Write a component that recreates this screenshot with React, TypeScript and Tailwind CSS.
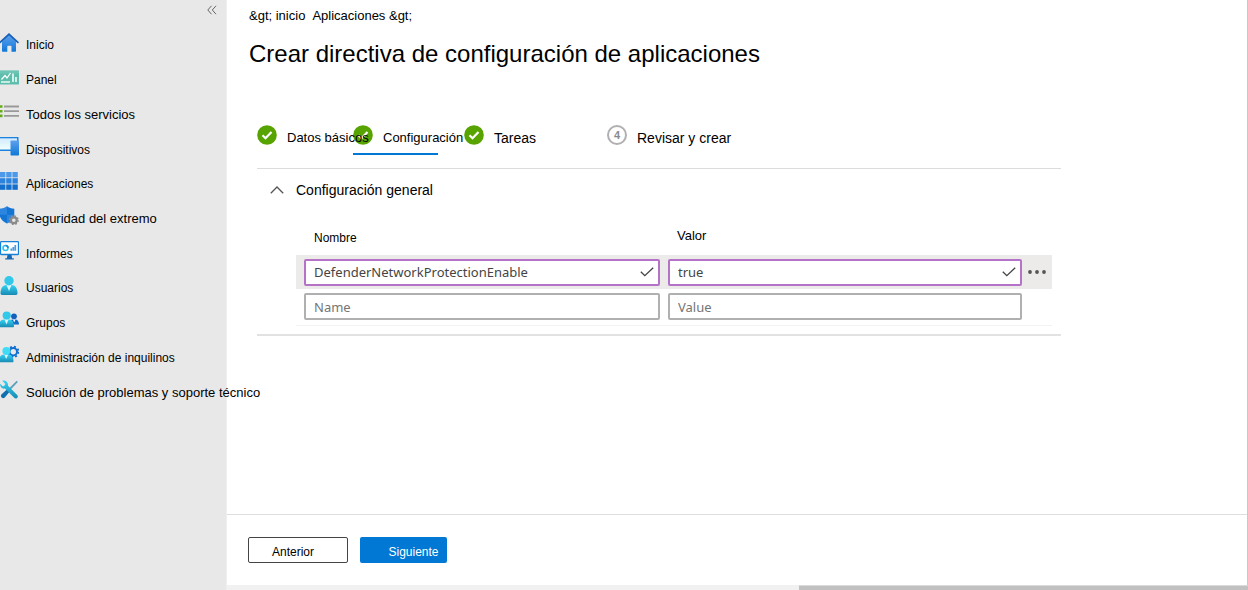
import { useState } from "react";
import type { ReactNode } from "react";
import clsx from "clsx";

function Svg({ children }: { children: ReactNode }) {
  return (
    <svg viewBox="0 0 19 19" className="size-[19px] shrink-0" aria-hidden="true">
      {children}
    </svg>
  );
}

function Gradients() {
  return (
    <svg className="absolute size-0" aria-hidden="true">
      <defs>
        <linearGradient id="blue" x1="0" y1="0" x2="0" y2="1">
          <stop offset="0" stopColor="#5ea0ef" />
          <stop offset="1" stopColor="#0f78d6" />
        </linearGradient>
        <linearGradient id="cyan" x1="0" y1="0" x2="0" y2="1">
          <stop offset="0" stopColor="#32d4f5" />
          <stop offset="1" stopColor="#198ab3" />
        </linearGradient>
        <linearGradient id="screen" x1="0" y1="0" x2="0" y2="1">
          <stop offset="0" stopColor="#d2ebff" />
          <stop offset="1" stopColor="#f0fffd" />
        </linearGradient>
      </defs>
    </svg>
  );
}

const HomeIcon = () => (
  <Svg>
    <path d="M2 8.500 9 2l7 6.500V18a.8.8 0 0 1-.8.8H11.500v-5.300a.7.7 0 0 0-.7-.7H8a.7.7 0 0 0-.7.7v5.300H2.800a.8.8 0 0 1-.8-.8z" fill="url(#blue)" />
    <path d="M9 0 19 9.300l-1.100 1.100L9 2.600.1 10.400-1 9.300z" fill="#1560b8" />
  </Svg>
);

const DashboardIcon = () => (
  <Svg>
    <rect x="-1" y="2.500" width="20" height="14" rx=".6" fill="#5fbdab" />
    <path d="M-1 2.500h20v3H-1z" fill="#7ccfbf" opacity=".5" />
    <path d="M1.500 11.500 5 7.500l2 2.500 3.500-5" fill="none" stroke="#fff" strokeWidth="1.300" />
    <path d="M1 14h9M13 5.500V14M16 9v5" fill="none" stroke="#e9faf6" strokeWidth="1.700" />
  </Svg>
);

const ServicesIcon = () => (
  <Svg>
    <path d="M4 4.500h15M4 9.200h15M4 13.900h15" stroke="#999" strokeWidth="1.800" />
    <path d="M0 4.500h2.500M0 9.200h2.500M0 13.900h2.500" stroke="#65ad16" strokeWidth="2.600" />
  </Svg>
);

const DevicesIcon = () => (
  <Svg>
    <rect x="-2" y="0" width="20.500" height="14" rx=".6" fill="#1b83dd" />
    <rect x="-1" y="1.300" width="18" height="11.200" fill="url(#screen)" />
    <rect x="10.500" y="3.500" width="8.500" height="15" rx=".7" fill="url(#blue)" />
  </Svg>
);

const AppsIcon = () => (
  <Svg>
    {[0, 1, 2].map((row) =>
      [0, 1, 2].map((col) => (
        <rect
          key={`${row}-${col}`}
          x={col * 6.2}
          y={row * 6.2}
          width="5.400"
          height="5.400"
          fill={["#4c98ea", "#2b82df", "#136fcd"][row]}
        />
      )),
    )}
  </Svg>
);

const ShieldIcon = () => (
  <Svg>
    <path d="M7 .3c2 1.600 4.200 2.300 7.300 2.400v6c0 4-3.500 6.900-7.300 8.800C3.200 15.600-.3 12.700-.3 8.700v-6C2.800 2.600 5 1.900 7 .3z" fill="#1474d4" />
    <path d="M7 .3v8.500H-.3V2.700C2.800 2.600 5 1.900 7 .3zM7 8.800h7.300c0 4-3.500 6.900-7.300 8.700z" fill="#4a9bea" opacity=".45" />
    <circle cx="13.800" cy="14.200" r="2.900" fill="#e8e8e8" stroke="#8a8a8a" strokeWidth="2.200" />
    <circle cx="13.800" cy="14.200" r="4.300" fill="none" stroke="#8a8a8a" strokeWidth="1.500" strokeDasharray="1.690 1.690" />
  </Svg>
);

const ReportsIcon = () => (
  <Svg>
    <rect x=".5" y=".7" width="18" height="12.800" rx=".8" fill="#fff" stroke="#1780d8" strokeWidth="1.300" />
    <circle cx="5.500" cy="7" r="2.500" fill="none" stroke="#32c4ee" strokeWidth="1.600" />
    <path d="M5.500 4.500A2.500 2.500 0 0 1 8 7" fill="none" stroke="#1e8ad8" strokeWidth="1.600" />
    <path d="M11.300 9.800V7.500M13.300 9.800V6M15.300 9.800V4" stroke="#4a9be0" strokeWidth="1.700" />
    <path d="M7.500 14h4l.6 3.200h1.700v1.300H5.200v-1.300h1.700z" fill="#1668b5" />
  </Svg>
);

const UserIcon = () => (
  <Svg>
    <path d="M.5 17.300C.5 12.500 3 9 6.300 9h5.400c3.300 0 5.800 3.500 5.800 8.300 0 .9-.6 1.600-1.500 1.600H2c-.9 0-1.500-.7-1.500-1.600z" fill="url(#cyan)" />
    <path d="M6.500 9h5l-2.500 6z" fill="#fff" opacity=".85" />
    <circle cx="9" cy="4.700" r="4.700" fill="#32c8ea" />
  </Svg>
);

const GroupsIcon = () => (
  <Svg>
    <path d="M9.500 13.500c0-3.200 1.400-5 3.200-5h2.800c2 0 3.500 2 3.500 5z" fill="#0f6cc8" />
    <circle cx="14" cy="5.300" r="2.900" fill="#1560bd" />
    <path d="M13 8.500h2.500l-1.300 3z" fill="#fff" />
    <path d="M-1 15.200C-1 11 1 8.500 4 8.500h5c2.800 0 5 2.700 5 6.700 0 .6-.4 1.100-1 1.100H0c-.6 0-1-.5-1-1.100z" fill="url(#cyan)" />
    <path d="M4.500 8.500h4l-2 5z" fill="#fff" opacity=".85" />
    <circle cx="6.700" cy="4.500" r="4.100" fill="#32c8ea" />
  </Svg>
);

const TenantIcon = () => (
  <Svg>
    <circle cx="13.300" cy="6.800" r="3.700" fill="none" stroke="#0f6fd0" strokeWidth="2" />
    <circle cx="13.300" cy="6.800" r="5.200" fill="none" stroke="#0f6fd0" strokeWidth="1.800" strokeDasharray="2.040 2.040" />
    <path d="M-1 16.200C-1 12 1 9.500 4 9.500h4.500c2.800 0 5 2.700 5 6.700 0 .6-.4 1.100-1 1.100H0c-.6 0-1-.5-1-1.100z" fill="url(#cyan)" />
    <path d="M4.200 9.500h4l-2 4.500z" fill="#fff" opacity=".85" />
    <circle cx="6.400" cy="5.900" r="4" fill="#40dcf5" />
  </Svg>
);

const ToolsIcon = () => (
  <Svg>
    <path d="M16.700.800 17.800 1.900 9.800 10.400 8.400 9z" fill="#5b9fbd" />
    <path d="M8.300 8.300 10.600 10.600 4.800 17.400a2.200 2.200 0 0 1-3.200-3.200z" fill="#0f6fb0" />
    <path d="M2.300.800 5.400 4 4.500 5.600 2.900 6.400.3 3.800C-.4 6.900 2 9.200 5 8.500l9.200 9.300a2 2 0 0 0 3-2.800L8 5.800C8.600 2.500 5.400-.2 2.300.800z" fill="url(#cyan)" />
  </Svg>
);

const navItems = [
  { label: "Inicio", Icon: HomeIcon },
  { label: "Panel", Icon: DashboardIcon },
  { label: "Todos los servicios", Icon: ServicesIcon, large: true },
  { label: "Dispositivos", Icon: DevicesIcon },
  { label: "Aplicaciones", Icon: AppsIcon },
  { label: "Seguridad del extremo", Icon: ShieldIcon, large: true },
  { label: "Informes", Icon: ReportsIcon },
  { label: "Usuarios", Icon: UserIcon },
  { label: "Grupos", Icon: GroupsIcon },
  { label: "Administración de inquilinos", Icon: TenantIcon },
  { label: "Solución de problemas y soporte técnico", Icon: ToolsIcon, large: true },
];

function Sidebar() {
  return (
    <aside className="relative z-10 flex w-[227px] shrink-0 flex-col border-r border-[#efefef] bg-[#e8e8e8]">
      <button type="button" aria-label="Contraer menú" className="mr-1.5 flex h-5 w-4 items-center justify-center self-end text-[#666]">
        <svg viewBox="0 0 10 10" className="size-2.5" fill="none" stroke="currentColor" aria-hidden="true">
          <path d="M4.500.800.800 5l3.700 4.200M9 .800 5.300 5 9 9.200" />
        </svg>
      </button>
      <nav className="pt-[5px]">
        <ul className="grid h-[382px] auto-rows-fr">
          {navItems.map(({ label, Icon, large }) => (
            <li key={label} className="flex">
              <a
                href="#"
                className={clsx(
                  "flex items-center gap-[7px] whitespace-nowrap",
                  large ? "text-[13px]" : "text-xs",
                )}
              >
                <Icon />
                <span className="pt-1.5">{label}</span>
              </a>
            </li>
          ))}
        </ul>
      </nav>
    </aside>
  );
}

function DoneBadge() {
  return (
    <svg viewBox="0 0 20 20" className="size-5 shrink-0" aria-hidden="true">
      <circle cx="10" cy="10" r="9.800" fill="#57a300" />
      <path d="m5.500 10.200 3 3 6-6.300" fill="none" stroke="#fff" strokeWidth="2.200" />
    </svg>
  );
}

const steps = [
  { label: "Datos básicos", width: "w-24", text: "text-[13px]", done: true },
  { label: "Configuración", width: "w-[111px]", text: "text-[13px]", done: true, active: true },
  { label: "Tareas", width: "w-[143px]", text: "text-sm", done: true },
  { label: "Revisar y crear", width: "w-36", text: "text-sm", done: false },
];

function Stepper() {
  return (
    <ol className="flex h-11 border-b border-[#dcdcdc]">
      {steps.map((step, index) => (
        <li key={step.label} className={clsx("shrink-0", step.width)}>
          <button type="button" className="flex h-5 items-center gap-2.5 whitespace-nowrap">
            {step.done ? (
              <DoneBadge />
            ) : (
              <span className="flex size-5 shrink-0 items-center justify-center rounded-full border-2 border-[#b0b0b0] text-[11px] font-bold text-[#8a8a8a]">
                {index + 1}
              </span>
            )}
            <span className={clsx("relative z-10 pt-1.5", step.text)}>{step.label}</span>
          </button>
          {step.active && <div className="mt-2 h-0.5 w-[85px] bg-[#0078d4]" />}
        </li>
      ))}
    </ol>
  );
}

function Field({ label, value, placeholder }: { label: string; value?: string; placeholder?: string }) {
  const [text, setText] = useState(value ?? "");
  const valid = text !== "";
  return (
    <div
      className={clsx(
        "flex h-[27px] items-center rounded-xs border-2 bg-white pr-1",
        valid ? "border-[#b573c8]" : "border-[#b0b0b0]",
      )}
    >
      <input
        aria-label={label}
        value={text}
        placeholder={placeholder}
        onChange={(event) => setText(event.target.value)}
        className="h-full min-w-0 flex-1 bg-transparent pl-2 font-['Noto_Sans',sans-serif] text-[13px] text-[#444] outline-none placeholder:text-[#757575]"
      />
      {valid && (
        <svg viewBox="0 0 14 10" className="h-2.5 w-3.5" fill="none" stroke="#444" strokeWidth="1.300" aria-hidden="true">
          <path d="m.800 4.700 4 4L13.200.800" />
        </svg>
      )}
    </div>
  );
}

function SettingsTable() {
  return (
    <table className="w-full table-fixed border-collapse">
      <colgroup>
        <col />
        <col className="w-[358px]" />
        <col className="w-[30px]" />
      </colgroup>
      <thead>
        <tr className="h-9 text-left">
          <th className="pt-0.5 pl-[18px] text-xs font-normal">Nombre</th>
          <th className="pb-0.5 pl-[13px] text-[13px] font-normal">Valor</th>
          <td />
        </tr>
      </thead>
      <tbody>
        <tr className="h-[34px] bg-[#ecebe9]">
          <td className="pr-1 pl-2">
            <Field label="Nombre 1" value="DefenderNetworkProtectionEnable" />
          </td>
          <td className="pl-1">
            <Field label="Valor 1" value="true" />
          </td>
          <td className="text-center">
            <button type="button" aria-label="Más opciones" className="flex h-6 w-full items-center justify-center">
              <svg viewBox="0 0 18 4" className="h-1 w-[18px]" fill="#555" aria-hidden="true">
                <circle cx="2" cy="2" r="1.900" />
                <circle cx="9" cy="2" r="1.900" />
                <circle cx="16" cy="2" r="1.900" />
              </svg>
            </button>
          </td>
        </tr>
        <tr className="h-9 border-b border-[#f3f3f3]">
          <td className="pr-1 pl-2">
            <Field label="Nombre 2" placeholder="Name" />
          </td>
          <td className="pl-1">
            <Field label="Valor 2" placeholder="Value" />
          </td>
          <td />
        </tr>
      </tbody>
    </table>
  );
}

export default function App() {
  return (
    <div className="flex min-h-screen bg-white font-['Liberation_Sans',Arial,sans-serif] text-black">
      <Gradients />
      <Sidebar />
      <div className="flex min-w-0 flex-1 flex-col">
        <div className="flex flex-1 flex-col border-r border-[#c8c8c8]">
          <main className="flex-1 pl-[22px]">
            <nav aria-label="Ruta" className="flex gap-[7px] pt-1.5 text-[13px] leading-5">
              <a href="#">&amp;gt; inicio</a>
              <a href="#">Aplicaciones &amp;gt;</a>
            </nav>
            <h1 className="pt-3 text-2xl">Crear directiva de configuración de aplicaciones</h1>
            <div className="max-w-[812px] pt-[55px] pl-2">
              <Stepper />
              <section className="border-b-2 border-[#e2e2e2] pr-[9px] pb-2 pl-[39px]">
                <h2 className="-ml-[26px] pt-[11px]">
                  <button type="button" aria-expanded="true" className="flex items-center gap-3 text-sm">
                    <svg viewBox="0 0 14 8" className="h-2 w-3.5" fill="none" stroke="#555" strokeWidth="1.300" aria-hidden="true">
                      <path d="M.800 7.300 7 1l6.200 6.300" />
                    </svg>
                    Configuración general
                  </button>
                </h2>
                <div className="pt-[19px]">
                  <SettingsTable />
                </div>
              </section>
            </div>
          </main>
          <footer className="flex gap-3 border-t border-[#dedede] px-[21px] py-[22px] text-xs">
            <button type="button" className="h-[26px] w-[100px] rounded-xs border border-[#444] pt-1 pr-2.5">
              Anterior
            </button>
            <button type="button" className="h-[26px] w-[87px] rounded-xs bg-[#0078d4] pt-1 pl-5 text-white">
              Siguiente
            </button>
          </footer>
        </div>
        <div className="flex h-[5px] justify-end bg-[#f1f1f1]">
          <div className="w-[44%] border-t border-[#dadada] bg-[#c1c1c1]" />
        </div>
      </div>
    </div>
  );
}
